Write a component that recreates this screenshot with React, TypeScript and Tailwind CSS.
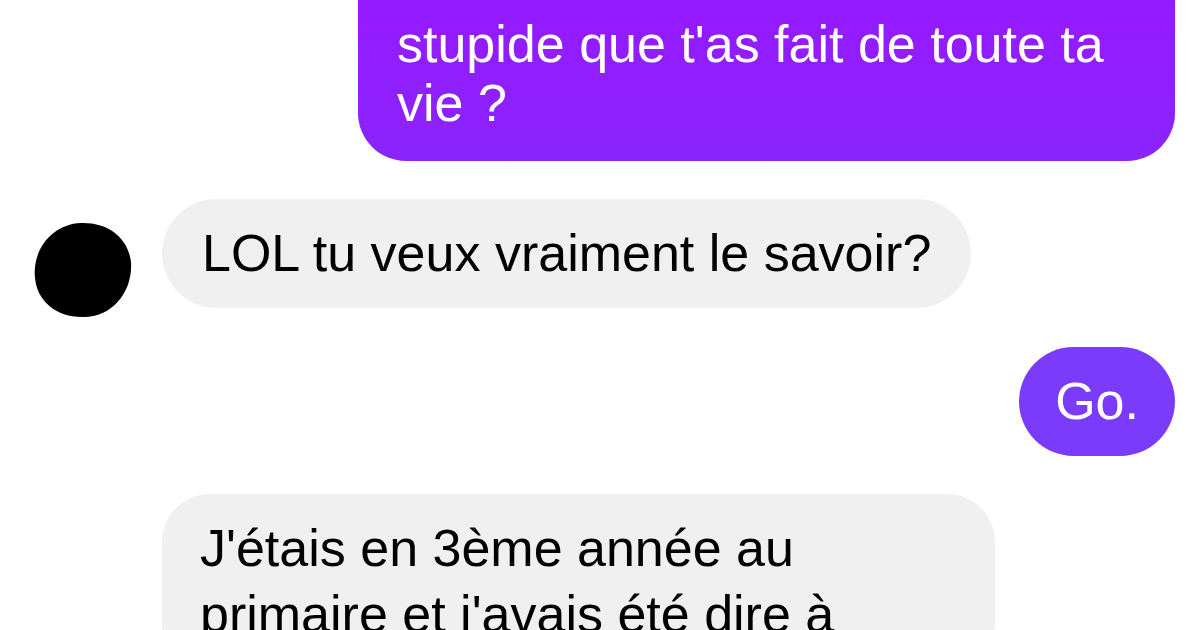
export default function App() {
  return (
    <main
      className="w-[1200px] h-[630px] overflow-hidden bg-white"
      style={{ fontFamily: '"Liberation Sans", Arial, sans-serif' }}
    >
      <div className="-mt-[69px] flex flex-col gap-[38px] pl-[32px] pr-[25px]">
        {/* sent: question, scrolled partly off the top */}
        <div className="flex justify-end">
          <p className="max-w-[817px] rounded-[48px] bg-linear-to-b from-[#9a12ff] to-[#8a24fd] pl-[39px] pr-[40px] pt-[84px] pb-[28px] text-[52px] leading-[59px] text-white">
            stupide que t'as fait de toute ta vie ?
          </p>
        </div>

        {/* received */}
        <div className="flex items-start gap-[29px]">
          <svg width="101" height="96" viewBox="0 0 101 96" className="mt-[23px] -mb-[9px] shrink-0">
            <path
              d="M49 1 C74 0 96 14 99 40 C101 70 80 95 52 95 C26 96 5 80 3 56 C0 28 20 2 49 1 Z"
              fill="#000"
            />
          </svg>
          <p className="rounded-[55px] bg-[#f0f0f0] px-[40px] py-[25px] text-[52px] leading-[59px] text-black">
            LOL tu veux vraiment le savoir?
          </p>
        </div>

        {/* sent */}
        <div className="flex justify-end">
          <p className="rounded-[55px] bg-[#7a3bfa] px-[36px] py-[25px] text-[52px] leading-[59px] text-white">
            Go.
          </p>
        </div>

        {/* received, no avatar on this one */}
        <div className="flex pl-[130px]">
          <p className="max-w-[833px] rounded-[48px] bg-[#f0f0f0] pl-[38px] pr-[40px] pt-[21px] pb-[25px] text-[52px] leading-[66px] text-black">
            J'étais en 3ème année au primaire et j'avais été dire à
          </p>
        </div>
      </div>
    </main>
  );
}
